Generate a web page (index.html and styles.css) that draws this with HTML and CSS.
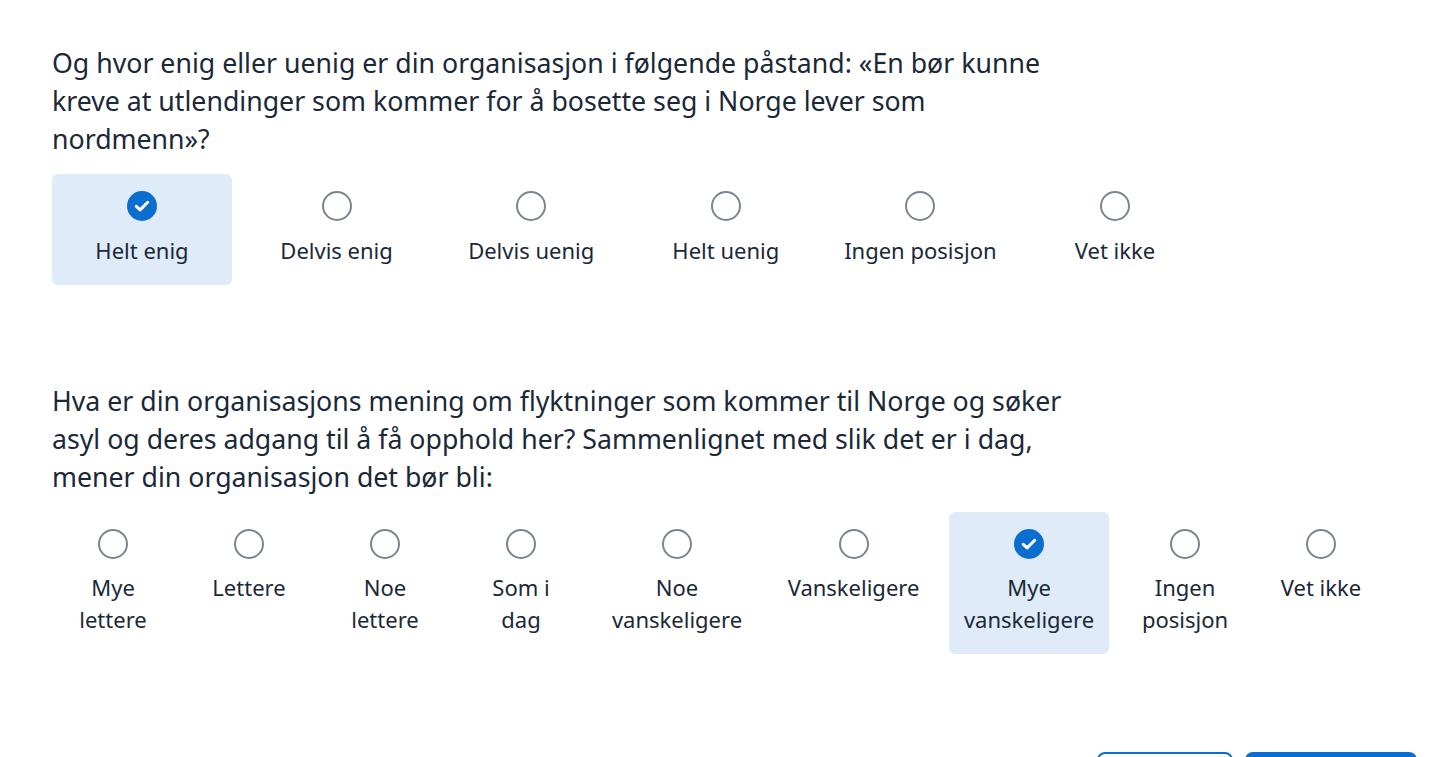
FILE: index.html
```html
<!DOCTYPE html>
<html lang="no">
<head>
<meta charset="utf-8">
<link rel="stylesheet" href="styles.css">
</head>
<body>
<main class="survey">
  <section class="question q1">
    <h2 class="q-text">Og hvor enig eller uenig er din organisasjon i følgende påstand: «En bør kunne kreve at utlendinger som kommer for å bosette seg i Norge lever som nordmenn»?</h2>
    <div class="choices row1">
      <div class="choice selected"><span class="radio"><svg viewBox="0 0 30 30" width="30" height="30"><circle cx="15" cy="15" r="15" fill="#0a6ed1"/><path d="M9.3 15.3l3.8 3.6 7.6-7.6" fill="none" stroke="#fff" stroke-width="3" stroke-linecap="round" stroke-linejoin="round"/></svg></span><span class="label">Helt enig</span></div>
      <div class="choice"><span class="radio"></span><span class="label">Delvis enig</span></div>
      <div class="choice"><span class="radio"></span><span class="label">Delvis uenig</span></div>
      <div class="choice"><span class="radio"></span><span class="label">Helt uenig</span></div>
      <div class="choice"><span class="radio"></span><span class="label">Ingen posisjon</span></div>
      <div class="choice"><span class="radio"></span><span class="label">Vet ikke</span></div>
    </div>
  </section>
  <section class="question q2">
    <h2 class="q-text">Hva er din organisasjons mening om flyktninger som kommer til Norge og søker asyl og deres adgang til å få opphold her? Sammenlignet med slik det er i dag, mener din organisasjon det bør bli:</h2>
    <div class="choices row2">
      <div class="choice"><span class="radio"></span><span class="label">Mye<br>lettere</span></div>
      <div class="choice"><span class="radio"></span><span class="label">Lettere</span></div>
      <div class="choice"><span class="radio"></span><span class="label">Noe<br>lettere</span></div>
      <div class="choice"><span class="radio"></span><span class="label">Som i<br>dag</span></div>
      <div class="choice"><span class="radio"></span><span class="label">Noe<br>vanskeligere</span></div>
      <div class="choice"><span class="radio"></span><span class="label">Vanskeligere</span></div>
      <div class="choice selected"><span class="radio"><svg viewBox="0 0 30 30" width="30" height="30"><circle cx="15" cy="15" r="15" fill="#0a6ed1"/><path d="M9.3 15.3l3.8 3.6 7.6-7.6" fill="none" stroke="#fff" stroke-width="3" stroke-linecap="round" stroke-linejoin="round"/></svg></span><span class="label">Mye<br>vanskeligere</span></div>
      <div class="choice"><span class="radio"></span><span class="label">Ingen<br>posisjon</span></div>
      <div class="choice"><span class="radio"></span><span class="label">Vet ikke</span></div>
    </div>
  </section>
  <nav class="nav-buttons">
    <button class="btn btn-back" type="button">Tilbake</button>
    <button class="btn btn-next" type="button">Neste</button>
  </nav>
</main>
</body>
</html>
```
FILE: styles.css
```css
* { box-sizing: border-box; }
html, body { margin: 0; padding: 0; background: #fff; }
body {
  font-family: "Noto Sans", "Open Sans", sans-serif;
  color: #1a2838;
  overflow: hidden;
  height: 757px;
}
.survey {
  padding: 44px 0 0 52px;
  width: 1456px;
}
.q-text {
  margin: 0;
  font-weight: 400;
  font-size: 26.7px;
  line-height: 38px;
  width: 1020px;
}
.choices {
  display: flex;
  align-items: flex-start;
}
.row1 {
  margin-top: 16px;
  gap: 14.6px;
}
.row1 .choice { width: 180px; height: 111px; padding-top: 17px; }
.row2 {
  margin-top: 16px;
  gap: 14px;
}
.row2 .choice { height: 142px; padding-top: 17px; }
.row2 .choice .label { margin-top: 12px; }
.row2 .choice:nth-child(1),
.row2 .choice:nth-child(2),
.row2 .choice:nth-child(3),
.row2 .choice:nth-child(4) { width: 122px; }
.row2 .choice:nth-child(5) { width: 162px; }
.row2 .choice:nth-child(6) { width: 163px; }
.row2 .choice:nth-child(7) { width: 160px; }
.row2 .choice:nth-child(8) { width: 124px; }
.row2 .choice:nth-child(9) { width: 120px; }
.q2 { margin-top: 97px; }
.choice {
  display: flex;
  flex-direction: column;
  align-items: center;
  border-radius: 6px;
  text-align: center;
}
.choice.selected { background: #dfebf9; }
.radio {
  width: 30px;
  height: 30px;
  border-radius: 50%;
  border: 2.5px solid #7b8590;
  display: block;
  flex: none;
}
.selected .radio { border: 0; }
.radio svg { display: block; }
.label {
  margin-top: 13px;
  font-size: 22px;
  line-height: 32px;
  white-space: nowrap;
}
.nav-buttons {
  position: absolute;
  top: 752px;
  left: 1097px;
  display: flex;
  gap: 12px;
}
.btn {
  height: 44px;
  border-radius: 8px;
  font: 400 20px "Noto Sans", sans-serif;
  padding: 0;
}
.btn-back { width: 136px; border: 2px solid #0a6ed1; background: #fff; color: #0a6ed1; }
.btn-next { width: 172px; border: 0; background: #0a6ed1; color: #fff; }
```
